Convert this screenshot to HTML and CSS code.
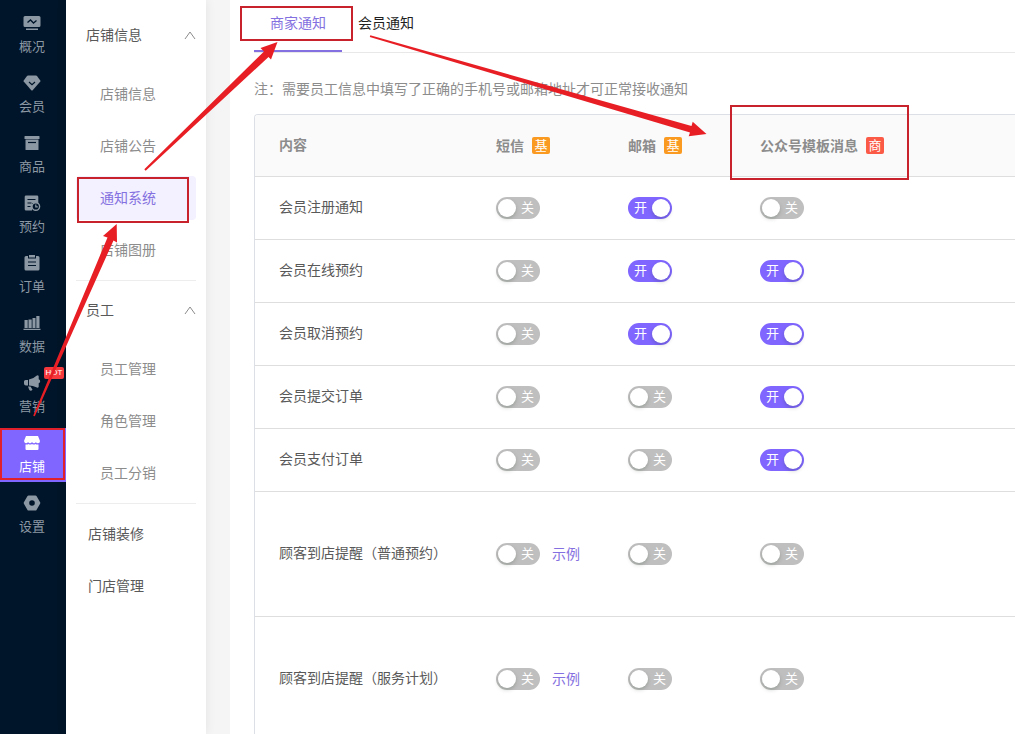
FILE: index.html
```html
<!DOCTYPE html>
<html lang="zh-CN">
<head>
<meta charset="utf-8">
<meta name="viewport" content="width=device-width, initial-scale=1">
<title>通知系统</title>
<link rel="stylesheet" href="styles.css">
</head>
<body>
<div class="app">
  <nav class="rail" aria-label="主导航">
    <a class="rail-item" href="#">
      <svg class="rail-icon" viewBox="0 0 18 18"><path fill="currentColor" fill-rule="evenodd" d="M2 2h14a1.500 1.500 0 0 1 1.500 1.500v8A1.500 1.500 0 0 1 16 13H2A1.500 1.500 0 0 1 .5 11.500v-8A1.500 1.500 0 0 1 2 2zM3 14.500h12V16H3z"/><path fill="none" stroke="#001529" stroke-width="1.300" d="M4.500 8.500 7.500 6l3 3 3-2.500"/></svg>
      <span>概况</span>
    </a>
    <a class="rail-item" href="#">
      <svg class="rail-icon" viewBox="0 0 18 18"><path fill="currentColor" d="M5 1.500h8q.6 0 1 .5l3.300 4.400q.4.600 0 1.100L9.700 16.200q-.7.700-1.400 0L.7 7.500q-.4-.5 0-1.100L4 2Q4.400 1.500 5 1.500z"/><path fill="none" stroke="#001529" stroke-width="1.200" d="m6 8 3 2.800L12 8"/></svg>
      <span>会员</span>
    </a>
    <a class="rail-item" href="#">
      <svg class="rail-icon" viewBox="0 0 18 18"><path fill="currentColor" d="M2 2h14q.5 0 .5.500V5h-15V2.500Q1.500 2 2 2zM2.500 5.500h13v10q0 .5-.5.500H3q-.5 0-.5-.5z"/><path fill="none" stroke="#001529" stroke-width="1.200" d="M5 8.500h8"/></svg>
      <span>商品</span>
    </a>
    <a class="rail-item" href="#">
      <svg class="rail-icon" viewBox="0 0 18 18"><path fill="currentColor" d="M3 1.500h11q1.300 0 1.300 1.300V9H9v7.500H3q-1.300 0-1.300-1.300V2.800q0-1.300 1.300-1.300z"/><path fill="none" stroke="#001529" stroke-width="1.100" d="M4.500 5.500h8M4.500 9h4M4.500 12.500h3"/><circle cx="12.800" cy="12.500" r="3.800" fill="#001529" stroke="currentColor" stroke-width="1.400"/><path fill="none" stroke="currentColor" stroke-width="1.200" d="M12.800 10.500v2.300h2"/></svg>
      <span>预约</span>
    </a>
    <a class="rail-item" href="#">
      <svg class="rail-icon" viewBox="0 0 18 18"><path fill="currentColor" d="M3 2h2v2.500h8V2h2q1.500 0 1.500 1.500V15q0 1.500-1.500 1.500H3Q1.500 16.500 1.500 15V3.500Q1.500 2 3 2zM6 1h6v2.500H6z"/><path fill="none" stroke="#001529" stroke-width="1.200" d="M5 8h8M5 11.500h8"/></svg>
      <span>订单</span>
    </a>
    <a class="rail-item" href="#">
      <svg class="rail-icon" viewBox="0 0 18 18"><path fill="currentColor" d="M1.500 6h3.200v8H1.500zM5.500 5.500h3.200V14H5.500zM9.500 4h3v10h-3zM13.300 2h3.200v12h-3.200zM.5 14.800h17v1.200H.5z"/></svg>
      <span>数据</span>
    </a>
    <a class="rail-item" href="#">
      <svg class="rail-icon" viewBox="0 0 18 18"><path fill="currentColor" d="M2.500 6H5v5.500H3Q1 11.500 1 9.500v-2Q1 6 2.500 6zM6 5.600q4-.6 7.500-3.900 1.800-1 2.200.5v3q1.500.4 1.500 2t-1.500 2v3.500q-.6 1.600-2.400.5Q10 11.500 6 11.500zM5 12.500h2.500l2 3.300q-1.900 1.700-3.300 0z"/></svg>
      <span>营销</span>
      <em class="hot">HOT</em>
    </a>
    <a class="rail-item is-active" href="#" aria-current="page">
      <svg class="rail-icon" viewBox="0 0 18 18"><path fill="currentColor" d="M3 2h12l2 5q0 2.200-2 2.200T13 8q-.8 1.200-2 1.200T9 8Q8.200 9.200 7 9.200T5 8q-.5 1.200-2 1.200T1 7zM2.500 10.500q2 .4 3-.5 1.500 1.200 3.500 0 2 1.200 3.500 0 1 .9 3 .5V15q0 1-1 1h-11q-1 0-1-1z"/></svg>
      <span>店铺</span>
    </a>
    <a class="rail-item" href="#">
      <svg class="rail-icon" viewBox="0 0 18 18"><path fill="currentColor" fill-rule="evenodd" d="M5.500 1.500h7q.7 0 1 .6l3.600 6.200q.4.700 0 1.400l-3.600 6.200q-.3.600-1 .6h-7q-.7 0-1-.6L.9 9.700q-.4-.7 0-1.400l3.600-6.200q.3-.6 1-.6zM9 6.200a2.800 2.800 0 1 0 0 5.600 2.800 2.800 0 0 0 0-5.600z"/></svg>
      <span>设置</span>
    </a>
  </nav>

  <aside class="side">
    <section class="group">
      <button class="group-title" type="button" aria-expanded="true">店铺信息
        <svg class="chevron" viewBox="0 0 12 12"><path d="m1 10 5-7 5 7"/></svg>
      </button>
      <div class="group-items">
        <a class="side-link" href="#">店铺信息</a>
        <a class="side-link" href="#">店铺公告</a>
        <a class="side-link is-active" href="#" aria-current="page">通知系统</a>
        <a class="side-link" href="#">店铺图册</a>
      </div>
    </section>
    <section class="group">
      <button class="group-title" type="button" aria-expanded="true">员工
        <svg class="chevron" viewBox="0 0 12 12"><path d="m1 10 5-7 5 7"/></svg>
      </button>
      <div class="group-items">
        <a class="side-link" href="#">员工管理</a>
        <a class="side-link" href="#">角色管理</a>
        <a class="side-link" href="#">员工分销</a>
      </div>
    </section>
    <section class="group-plain">
      <a class="side-link" href="#">店铺装修</a>
      <a class="side-link" href="#">门店管理</a>
    </section>
  </aside>

  <main class="main">
    <div class="tabs" role="tablist">
      <button class="tab is-active" type="button" role="tab" aria-selected="true">商家通知</button>
      <button class="tab" type="button" role="tab" aria-selected="false">会员通知</button>
    </div>
    <p class="note">注：需要员工信息中填写了正确的手机号或邮箱地址才可正常接收通知</p>
    <div class="table-wrap">
      <table class="table">
        <thead>
          <tr>
            <th class="col-name" scope="col">内容</th>
            <th class="col-channel" scope="col"><span class="head">短信<i class="tag">基</i></span></th>
            <th class="col-channel" scope="col"><span class="head">邮箱<i class="tag">基</i></span></th>
            <th scope="col"><span class="head">公众号模板消息<i class="tag tag-red">商</i></span></th>
          </tr>
        </thead>
        <tbody>
          <tr>
            <td>会员注册通知</td>
            <td><label class="switch"><input type="checkbox" aria-label="短信"><span>关</span></label></td>
            <td><label class="switch"><input type="checkbox" aria-label="邮箱" checked><span>开</span></label></td>
            <td><label class="switch"><input type="checkbox" aria-label="公众号模板消息"><span>关</span></label></td>
          </tr>
          <tr>
            <td>会员在线预约</td>
            <td><label class="switch"><input type="checkbox" aria-label="短信"><span>关</span></label></td>
            <td><label class="switch"><input type="checkbox" aria-label="邮箱" checked><span>开</span></label></td>
            <td><label class="switch"><input type="checkbox" aria-label="公众号模板消息" checked><span>开</span></label></td>
          </tr>
          <tr>
            <td>会员取消预约</td>
            <td><label class="switch"><input type="checkbox" aria-label="短信"><span>关</span></label></td>
            <td><label class="switch"><input type="checkbox" aria-label="邮箱" checked><span>开</span></label></td>
            <td><label class="switch"><input type="checkbox" aria-label="公众号模板消息" checked><span>开</span></label></td>
          </tr>
          <tr>
            <td>会员提交订单</td>
            <td><label class="switch"><input type="checkbox" aria-label="短信"><span>关</span></label></td>
            <td><label class="switch"><input type="checkbox" aria-label="邮箱"><span>关</span></label></td>
            <td><label class="switch"><input type="checkbox" aria-label="公众号模板消息" checked><span>开</span></label></td>
          </tr>
          <tr>
            <td>会员支付订单</td>
            <td><label class="switch"><input type="checkbox" aria-label="短信"><span>关</span></label></td>
            <td><label class="switch"><input type="checkbox" aria-label="邮箱"><span>关</span></label></td>
            <td><label class="switch"><input type="checkbox" aria-label="公众号模板消息" checked><span>开</span></label></td>
          </tr>
          <tr class="row-tall">
            <td>顾客到店提醒（普通预约）</td>
            <td><div class="cell"><label class="switch"><input type="checkbox" aria-label="短信"><span>关</span></label><a class="example" href="#">示例</a></div></td>
            <td><label class="switch"><input type="checkbox" aria-label="邮箱"><span>关</span></label></td>
            <td><label class="switch"><input type="checkbox" aria-label="公众号模板消息"><span>关</span></label></td>
          </tr>
          <tr class="row-tall">
            <td>顾客到店提醒（服务计划）</td>
            <td><div class="cell"><label class="switch"><input type="checkbox" aria-label="短信"><span>关</span></label><a class="example" href="#">示例</a></div></td>
            <td><label class="switch"><input type="checkbox" aria-label="邮箱"><span>关</span></label></td>
            <td><label class="switch"><input type="checkbox" aria-label="公众号模板消息"><span>关</span></label></td>
          </tr>
        </tbody>
      </table>
    </div>
  </main>

  <svg class="guide" width="1015" height="734" viewBox="0 0 1015 734" aria-hidden="true">
    <g fill="none" stroke="#c8232c" stroke-width="2">
      <rect x="1" y="429" width="63" height="50" stroke="#e0202a"/>
      <rect x="78" y="178" width="110" height="44"/>
      <rect x="241" y="7" width="111" height="33"/>
      <rect x="731" y="106" width="177" height="73"/>
    </g>
    <g fill="#e81e25">
      <path d="M33.200 415.700 107.500 237.500 103 236l13.700-12 .3 18.500-3.500-2L34.800 416.300z"/>
      <path d="M144.300 169.300 264 51.500l-3.500-3.500 17-6-6.500 17.500-2.500-2.500L145.700 170.700z"/>
      <path d="M370.300 35.200 691.500 126l1.200-4.300 13.800 12.300-17.800 2.200 1.300-3.700L369.800 37z"/>
    </g>
  </svg>
</div>
</body>
</html>
```
FILE: styles.css
```css
* {
  box-sizing: border-box;
}

body {
  margin: 0;
  font-family: "Liberation Sans", "Noto Sans CJK SC", sans-serif;
  font-size: 14px;
  line-height: 22px;
  color: #595959;
  background: #f5f5f5;
}

a {
  color: inherit;
  text-decoration: none;
}

button {
  margin: 0;
  border: 0;
  background: none;
  font: inherit;
  color: inherit;
  cursor: pointer;
}

.app {
  position: relative;
  display: flex;
  height: 100vh;
  overflow: hidden;
}

/* Primary navigation */
.rail {
  flex: none;
  display: flex;
  flex-direction: column;
  gap: 6px;
  width: 66px;
  padding-top: 8px;
  background: #001529;
  color: #8c98a4;
}

.rail-item {
  position: relative;
  display: flex;
  flex-direction: column;
  align-items: center;
  gap: 6px;
  height: 54px;
  padding: 6px 2px 0 0;
  font-size: 13px;
  line-height: 18px;
}

.rail-item.is-active {
  background: #8066ff;
  color: #fff;
}

.rail-icon {
  width: 18px;
  height: 18px;
}

.hot {
  position: absolute;
  top: -1px;
  right: 2px;
  width: 20px;
  border-radius: 2px;
  background: #f5383b;
  color: #fff;
  font-size: 8px;
  font-style: normal;
  line-height: 12px;
  text-align: center;
}

/* Secondary navigation */
.side {
  flex: none;
  width: 140px;
  padding: 13px 10px 0;
  background: #fff;
  box-shadow: 0 0 10px rgba(0, 0, 0, 0.08);
}

.group {
  margin-bottom: 7px;
  padding-bottom: 8px;
  border-bottom: 1px solid #ededed;
}

.group-title {
  display: flex;
  align-items: center;
  justify-content: space-between;
  width: 100%;
  height: 44px;
  padding: 0 0 0 10px;
}

.chevron {
  width: 12px;
  height: 12px;
  fill: none;
  stroke: #8c8c8c;
  stroke-width: 1;
}

.group-items,
.group-plain {
  display: flex;
  flex-direction: column;
  gap: 8px;
}

.group-items {
  margin-top: 15px;
  color: #8c8c8c;
}

.group-plain {
  padding-top: 1px;
}

.side-link {
  height: 44px;
  padding-left: 24px;
  border-radius: 4px;
  line-height: 44px;
}

.group-plain .side-link {
  padding-left: 12px;
}

.side-link.is-active {
  background: #f3f0ff;
  color: #8470e0;
}

/* Content */
.main {
  flex: 1;
  min-width: 0;
  margin-left: 24px;
  padding-left: 24px;
  background: #fff;
}

.tabs {
  display: flex;
  height: 53px;
  border-bottom: 1px solid #e8e8e8;
}

.tab {
  height: 52px;
  padding: 0 16px 4px;
  border-bottom: 2px solid transparent;
  color: #1f1f1f;
}

.tab.is-active {
  border-color: #8470e0;
  color: #8470e0;
}

.note {
  margin: 25px 0 14px;
  color: #8c8c8c;
}

.table-wrap {
  border: solid #dcdfe6;
  border-width: 1px 0 0 1px;
  border-radius: 4px 0 0 0;
  overflow: hidden;
}

.table {
  width: 100%;
  border-spacing: 0;
  table-layout: fixed;
}

.table th,
.table td {
  height: 63px;
  padding: 0 0 0 24px;
  border-bottom: 1px solid #dedede;
  text-align: left;
}

.table td:first-child,
.table th:first-child {
  padding-bottom: 2px;
}

.table th {
  height: 62px;
  background: #fafafa;
  color: #8c8c8c;
}

.table .row-tall td {
  height: 125px;
}

.table .col-name {
  width: 217px;
}

.col-channel {
  width: 132px;
}

.head {
  display: flex;
  align-items: center;
  gap: 8px;
}

.tag {
  width: 18px;
  height: 17px;
  border-radius: 2px;
  background: #fa9a20;
  color: #fff;
  font-size: 13px;
  font-style: normal;
  font-weight: normal;
  line-height: 17px;
  text-align: center;
}

.tag-red {
  background: #fa5a46;
}

.cell {
  display: flex;
  align-items: center;
  gap: 12px;
}

.example {
  color: #8470e0;
}

.switch {
  display: grid;
  width: 44px;
  height: 22px;
  color: #fff;
  font-size: 13px;
  cursor: pointer;
}

.switch input,
.switch span {
  grid-area: 1 / 1;
}

.switch input {
  appearance: none;
  display: flex;
  width: 44px;
  height: 22px;
  margin: 0;
  padding: 2px;
  border-radius: 11px;
  background: #bfbfbf;
}

.switch input::before {
  content: "";
  width: 18px;
  height: 18px;
  border-radius: 50%;
  background: #fff;
  box-shadow: 0 2px 4px rgba(0, 35, 11, 0.2);
}

.switch input:checked {
  justify-content: flex-end;
  background: #8066ff;
}

.switch span {
  z-index: 1;
  justify-self: end;
  padding: 0 6px;
}

.switch input:checked + span {
  justify-self: start;
}

/* Walkthrough marks drawn over the page */
.guide {
  position: absolute;
  top: 0;
  left: 0;
  pointer-events: none;
}
```
